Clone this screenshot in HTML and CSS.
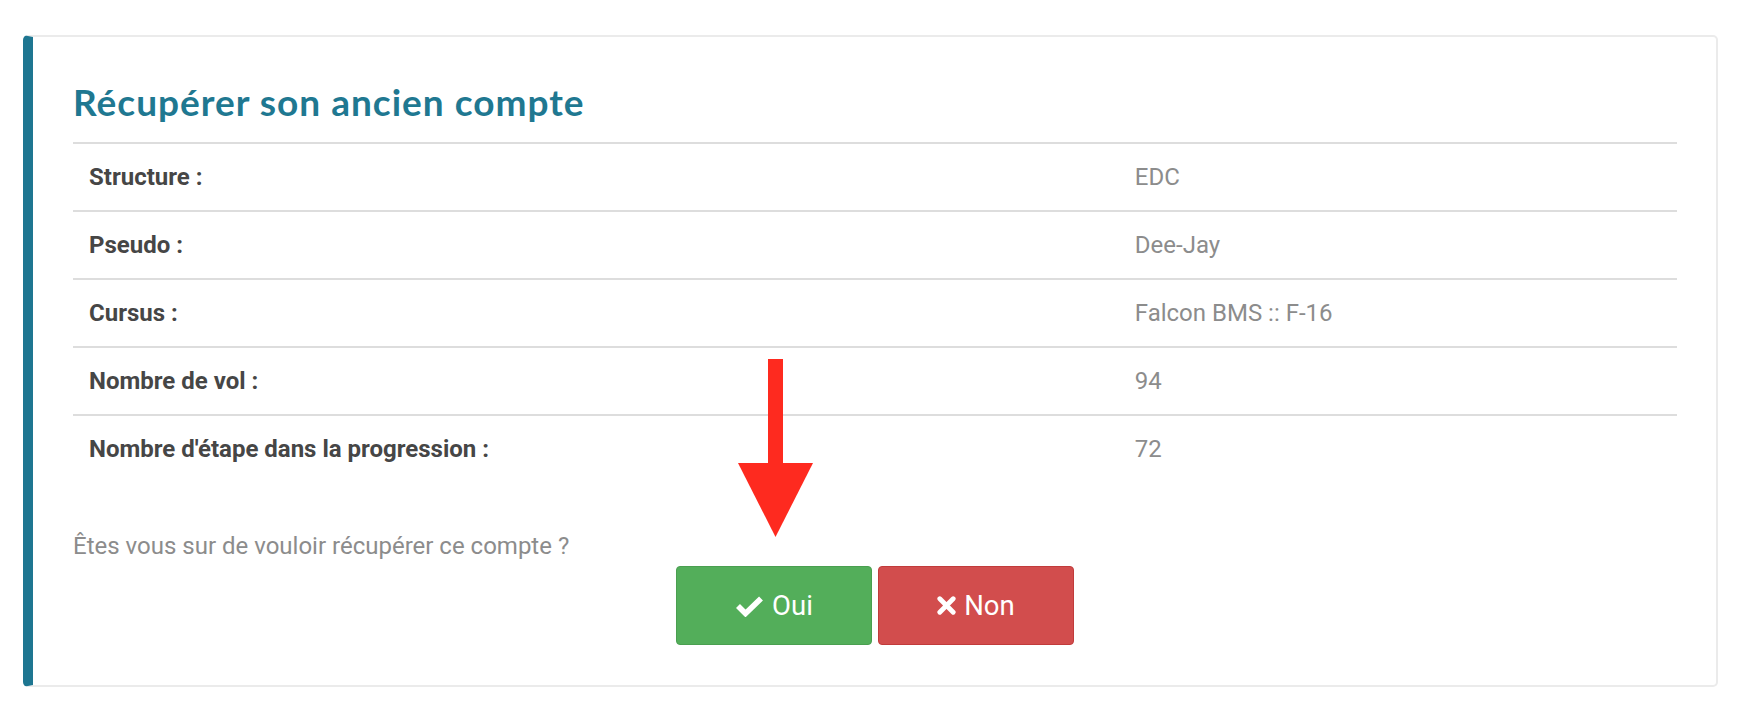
FILE: index.html
```html
<!DOCTYPE html>
<html lang="fr">
<head>
<meta charset="utf-8">
<title>Récupérer son ancien compte</title>
<link rel="stylesheet" href="styles.css">
</head>
<body>
<div class="page">
  <div class="card">
    <h3 class="title">Récupérer son ancien compte</h3>
    <table class="info">
      <tr><th>Structure :</th><td>EDC</td></tr>
      <tr><th>Pseudo :</th><td>Dee-Jay</td></tr>
      <tr><th>Cursus :</th><td>Falcon BMS :: F-16</td></tr>
      <tr><th>Nombre de vol :</th><td>94</td></tr>
      <tr><th>Nombre d'étape dans la progression :</th><td>72</td></tr>
    </table>
    <p class="question">Êtes vous sur de vouloir récupérer ce compte ?</p>
    <div class="actions">
      <button class="btn btn-yes" type="button">
        <svg class="ico ico-check" viewBox="0 0 29 22" aria-hidden="true"><path d="M3 11 L10.5 18.5 L26 3.5" fill="none" stroke="#fff" stroke-width="5.6" stroke-linejoin="miter" stroke-linecap="butt"/></svg>
        <span>Oui</span>
      </button>
      <button class="btn btn-no" type="button">
        <svg class="ico ico-times" viewBox="0 0 19 19" aria-hidden="true"><path d="M2.8 2.8 L16.2 16.2 M16.2 2.8 L2.8 16.2" fill="none" stroke="#fff" stroke-width="4.8" stroke-linecap="round"/></svg>
        <span>Non</span>
      </button>
    </div>
  </div>
  <svg class="arrow" viewBox="0 0 75 178" aria-hidden="true">
    <rect x="30" y="0" width="15" height="106" fill="#fe2a1f"/>
    <polygon points="0,104 75,104 37.5,178" fill="#fe2a1f"/>
  </svg>
</div>
</body>
</html>
```

FILE: styles.css
```css
html, body {
  margin: 0;
  padding: 0;
  background: #ffffff;
}

body {
  font-family: Roboto, "Liberation Sans", Arial, sans-serif;
  color: #464646;
}

.page {
  position: relative;
  padding: 35px 36px 0 23px;
}

.card {
  border: 2px solid #ebebeb;
  border-left: 10px solid #1e7691;
  border-radius: 5px;
  padding: 0 39px 40px 40px;
  background: #fff;
}

.title {
  margin: 0 0 20px 0;
  padding-top: 45px;
  font-family: Lato, "Open Sans", sans-serif;
  font-weight: 700;
  font-size: 37px;
  line-height: 40px;
  color: #1f7891;
  letter-spacing: 1px;
}

.info {
  width: 100%;
  border-collapse: separate;
  border-spacing: 0;
  font-size: 24px;
}

.info th,
.info td {
  text-align: left;
  border-top: 2px solid #dddddd;
  padding: 21px 16px;
  line-height: 24px;
  vertical-align: middle;
}

.info th {
  width: 65.2%;
  font-weight: 700;
  color: #464646;
}

.info td {
  font-weight: 400;
  color: #8c8c8c;
}

.question {
  margin: 52px 0 8px 0;
  font-size: 24px;
  line-height: 24px;
  color: #8c8c8c;
}

.actions {
  display: flex;
  justify-content: center;
  gap: 6px;
}

.btn {
  display: inline-flex;
  align-items: center;
  justify-content: center;
  gap: 8px;
  width: 196px;
  height: 79px;
  border-radius: 4px;
  border: 1px solid transparent;
  color: #ffffff;
  font-family: Roboto, "Liberation Sans", Arial, sans-serif;
  font-size: 27.5px;
  font-weight: 400;
  padding: 0;
  cursor: pointer;
}

.btn-yes {
  background: #53ae5a;
  border-color: #4a9f50;
}

.btn-no {
  background: #d24d4d;
  border-color: #c13b3b;
}

.ico-check {
  width: 29px;
  height: 22px;
}

.ico-times {
  width: 19px;
  height: 19px;
}

.arrow {
  position: absolute;
  left: 738px;
  top: 359px;
  width: 75px;
  height: 178px;
}
```
